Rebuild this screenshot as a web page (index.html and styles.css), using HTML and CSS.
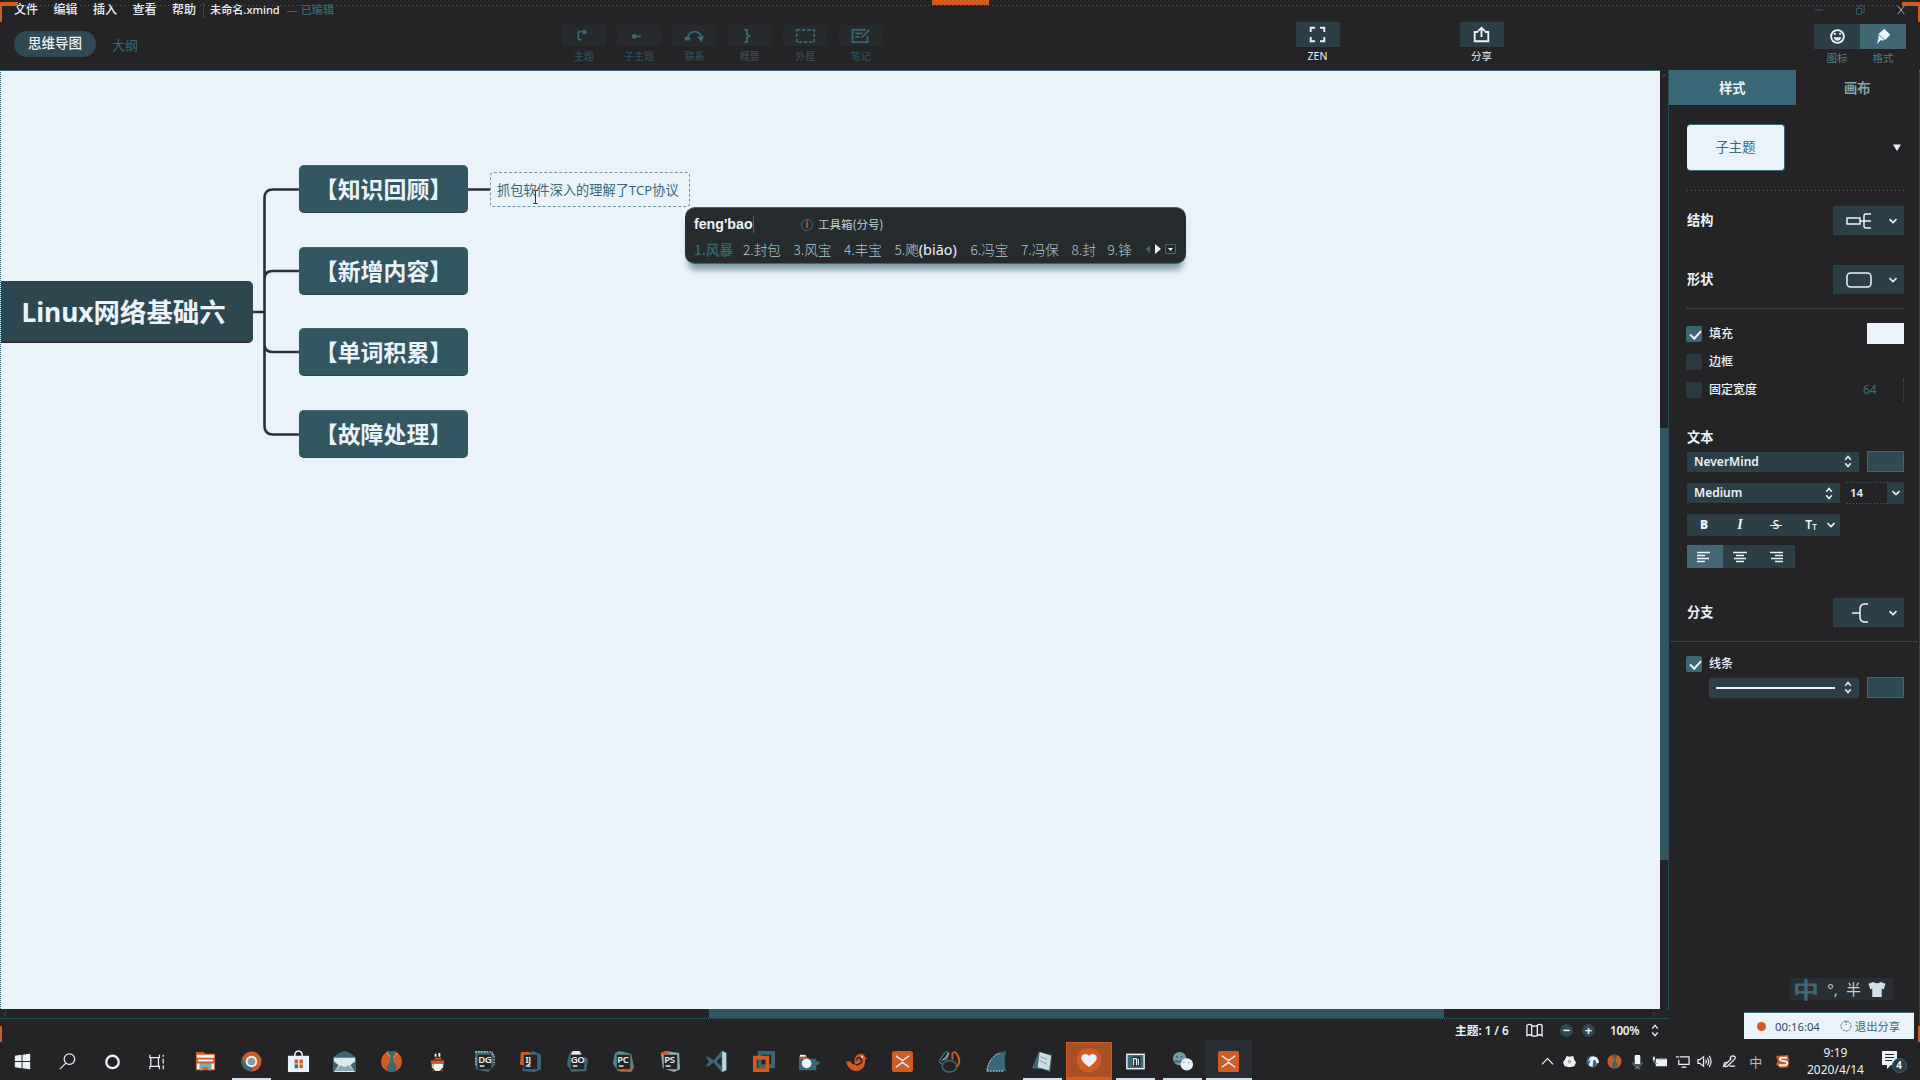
FILE: index.html
```html
<!DOCTYPE html>
<html lang="zh-CN">
<head>
<meta charset="utf-8">
<title>未命名.xmind</title>
<link rel="stylesheet" href="styles.css">
</head>
<body>
<div class="app">
  <header class="header">
    <div class="menubar">
      <nav class="menus"><span>文件</span><span>编辑</span><span>插入</span><span>查看</span><span>帮助</span></nav>
      <div class="doc"><b>未命名.xmind</b><i>—</i><em>已编辑</em></div>
      <div class="winctl">
        <svg viewBox="0 0 12 12"><path d="M1 6h10"/></svg>
        <svg viewBox="0 0 12 12"><path d="M2 4h6v7H2zM4 4V1h7v8H8"/></svg>
        <svg class="lit" viewBox="0 0 12 12"><path d="M2 1l8 10M10 1L2 11"/></svg>
      </div>
    </div>
    <div class="toolbar">
      <div class="modes"><span class="pill">思维导图</span><span class="outline">大纲</span></div>
      <div class="tools">
        <div class="tool"><span class="tbox"><svg viewBox="0 0 24 16"><path d="M10 3H8Q6 3 6 5v5q0 2 2 2h2"/><circle class="f" cx="13" cy="3.500" r="2.700"/></svg></span><small>主题</small></div>
        <div class="tool"><span class="tbox"><svg viewBox="0 0 24 16"><circle class="f" cx="6" cy="8.500" r="2.800"/><path d="M9 8.500h5"/></svg></span><small>子主题</small></div>
        <div class="tool"><span class="tbox"><svg viewBox="0 0 24 16"><path d="M4 11q1-8 8-8t8 8"/><path class="f" d="M1 9h6v4H1zM15 9l8-1-3 7z"/></svg></span><small>联系</small></div>
        <div class="tool"><span class="tbox"><svg viewBox="0 0 24 16"><path d="M6 1h3v5l3 2-3 2v5H6"/></svg></span><small>概要</small></div>
        <div class="tool"><span class="tbox"><svg viewBox="0 0 24 16"><path stroke-dasharray="4 2" d="M2 1h20v14H2z"/></svg></span><small>外框</small></div>
        <div class="tool"><span class="tbox"><svg viewBox="0 0 24 16"><path d="M20 8v7H3V1h15M6 5h8M6 9h5M22 1l-9 9"/></svg></span><small>笔记</small></div>
      </div>
      <div class="action"><span class="abox"><svg viewBox="0 0 20 20"><path d="M2 7V2h5M13 2h5v5M18 13v5h-5M7 18H2v-5"/></svg></span><small>ZEN</small></div>
      <div class="action"><span class="abox"><svg viewBox="0 0 20 20"><path d="M6 7H2v11h16V7h-4M10 13V2M6 6l4-4 4 4"/></svg></span><small>分享</small></div>
      <div class="panelsw">
        <div class="action dim"><span class="abox"><svg viewBox="0 0 20 20"><circle cx="10" cy="10" r="7.500"/><path d="M7 6v2M13 6v2"/><path class="f" d="M5.500 11h9q-1 4-4.500 4t-4.500-4z"/></svg></span><small>图标</small></div>
        <div class="action dim on"><span class="abox"><svg viewBox="0 0 20 20"><path class="f" d="M11 1l7 7-6 6-8-7zM4 8l7 6-2 1-2-1-5 5 2-6z"/></svg></span><small>格式</small></div>
      </div>
    </div>
  </header>

  <div class="body">
    <section class="work">
      <div class="canvasrow">
        <main class="canvas">
          <svg class="links" viewBox="0 0 700 500"><path d="M252 242h12M299 119.500h-26q-8.500 0-8.500 8.500v228q0 8.500 8.500 8.500h26M264.500 209q0-8 8-8H299M264.500 274q0 8 8 8H299M468 119.500h22"/></svg>
          <div class="root">Linux网络基础六</div>
          <div class="topic t1">【知识回顾】</div>
          <div class="topic t2">【新增内容】</div>
          <div class="topic t3">【单词积累】</div>
          <div class="topic t4">【故障处理】</div>
          <div class="editing">抓包软件深入的理解了TCP协议</div>
          <svg class="ibeam" viewBox="0 0 7 15"><path d="M1 .500h2l.500 1 .500-1h2M3.500 1v13M1 14.500h5"/></svg>
          <div class="ime">
            <div class="ime-top"><span class="typed">feng'bao</span><span class="info">i</span><span class="box">工具箱(分号)</span></div>
            <div class="cands">
              <span class="first">1.风暴</span><span>2.封包</span><span>3.风宝</span><span>4.丰宝</span><span>5.飑<b>(biāo)</b></span><span>6.冯宝</span><span>7.冯保</span><span>8.封</span><span>9.锋</span>
              <svg viewBox="0 0 32 12"><path class="p1" d="M6 2v8L2 6z"/><path class="p2" d="M11 1v10l6-5z"/><path class="p3" d="M21.500 1.500h10v9h-10z"/><path class="p2" d="M24 5h5l-2.500 3z"/></svg>
            </div>
          </div>
        </main>
        <div class="vscroll"><svg viewBox="0 0 8 6"><path d="M1 5l3-4 3 4"/></svg><span></span></div>
      </div>
      <div class="hscroll"><svg viewBox="0 0 6 8"><path d="M5 1L1 4l4 3"/></svg><span></span><svg viewBox="0 0 6 8"><path d="M1 1l4 3-4 3"/></svg></div>
      <div class="status">
        <b>主题: 1 / 6</b>
        <svg class="map" viewBox="0 0 18 14"><path d="M1 2q3-2 5 0t6 0q3-2 5 0v11q-2-2-5 0-3 1-6 0-2-2-5 0zM6 2v11M12 2v11"/></svg>
        <span class="zb">−</span><span class="zb">+</span>
        <b class="pct">100%</b>
        <svg class="ud" viewBox="0 0 8 14"><path d="M1 5l3-3.500L7 5M1 9l3 3.500L7 9"/></svg>
      </div>
    </section>

    <aside class="side">
      <div class="tabs"><span class="on">样式</span><span>画布</span></div>
      <div class="panel">
        <div class="preset"><span class="card">子主题</span><svg viewBox="0 0 8 7"><path d="M0 .500h8L4 7z"/></svg></div>
        <div class="dots"></div>
        <div class="row r-struct"><h3>结构</h3><span class="btn"><svg class="g" viewBox="0 0 26 18"><path d="M1 6h13v6H1zM14 9h11M25 2h-5q-2 0-2 2v10q0 2 2 2h5"/></svg><svg class="c" viewBox="0 0 8 6"><path d="M.500 1L4 4.500 7.500 1"/></svg></span></div>
        <div class="row r-shape"><h3>形状</h3><span class="btn"><svg class="g" viewBox="0 0 26 18"><rect x="1" y="2" width="24" height="14" rx="3.500"/></svg><svg class="c" viewBox="0 0 8 6"><path d="M.500 1L4 4.500 7.500 1"/></svg></span></div>
        <div class="dots dense"></div>
        <div class="row chk r-fill"><i class="ck on"></i><label>填充</label><span class="sw light"></span></div>
        <div class="row chk r-border"><i class="ck"></i><label>边框</label></div>
        <div class="row chk r-width"><i class="ck"></i><label>固定宽度</label><span class="num off">64</span></div>
        <div class="row r-text"><h3>文本</h3></div>
        <div class="row r-font"><span class="sel">NeverMind<svg viewBox="0 0 8 14"><path d="M1 5l3-3.500L7 5M1 9l3 3.500L7 9"/></svg></span><span class="sw"></span></div>
        <div class="row r-weight"><span class="sel">Medium<svg viewBox="0 0 8 14"><path d="M1 5l3-3.500L7 5M1 9l3 3.500L7 9"/></svg></span><span class="num">14</span><span class="drop"><svg viewBox="0 0 8 6"><path d="M.500 1L4 4.500 7.500 1"/></svg></span></div>
        <div class="row r-biu"><span><b>B</b></span><span><i>I</i></span><span><s>S</s></span><span>T<sub>T</sub><svg viewBox="0 0 8 6"><path d="M.500 1L4 4.500 7.500 1"/></svg></span></div>
        <div class="row r-align"><span class="on"><svg viewBox="0 0 14 12"><path d="M0 1.500h13M0 4.500h8M0 7.500h12M0 10.500h8"/></svg></span><span><svg viewBox="0 0 14 12"><path d="M0 1.500h14M3 4.500h8M1 7.500h12M3 10.500h8"/></svg></span><span><svg viewBox="0 0 14 12"><path d="M1 1.500h13M6 4.500h8M2 7.500h12M6 10.500h8"/></svg></span></div>
        <div class="row r-branch"><h3>分支</h3><span class="btn"><svg class="g" viewBox="0 0 26 20"><path d="M6 10h8M22 1h-3q-5 0-5 5v8q0 5 5 5h3"/></svg><svg class="c" viewBox="0 0 8 6"><path d="M.500 1L4 4.500 7.500 1"/></svg></span></div>
        <div class="dots full"></div>
        <div class="row chk r-line"><i class="ck on"></i><label>线条</label></div>
        <div class="row r-linesel"><span class="sel"><u></u><svg viewBox="0 0 8 14"><path d="M1 5l3-3.500L7 5M1 9l3 3.500L7 9"/></svg></span><span class="sw"></span></div>
      </div>
    </aside>
  </div>

  <footer class="taskbar">
    <div class="sys">
      <span><svg viewBox="0 0 24 24"><path fill="#eaf2fa" d="M4 6l7-1v6.500H4zM12 5l8-1v7.500h-8zM4 12.500h7V19l-7-1zM12 12.500h8V20l-8-1z"/></svg></span>
      <span><svg viewBox="0 0 24 24" class="ln"><circle cx="14" cy="9.500" r="5.500"/><path d="M10 14l-6 6"/></svg></span>
      <span><svg viewBox="0 0 24 24" class="ln bold"><circle cx="12" cy="12.500" r="6.500"/></svg></span>
      <span><svg viewBox="0 0 24 24" class="ln"><path d="M4 5v3h10V5M4 20v-3h10v3M5 8v9M13 8v9M18 5v2M18 9v5M18 16v4"/></svg></span>
    </div>
    <div class="apps">
      <span><svg viewBox="0 0 24 24"><path fill="#d05c24" d="M2 2h8l2 2h10v17H2z"/><path fill="#eaf2fa" d="M3 5h18v3H3zM4 10h16v2H4zM3 14h3v6H3zM18 14h3v6h-3z"/><path fill="#8aa6b1" d="M6 14h12v7h-3v-3H9v3H6z"/></svg></span>
      <span class="run"><svg viewBox="0 0 24 24"><circle cx="12" cy="12" r="10.500" fill="#d05c24"/><path fill="#3a6876" d="M2 8l5 7 5 2 1 5.500Q3 22 1.500 13z"/><circle cx="12" cy="12" r="6" fill="#eaf2fa"/><circle cx="12" cy="12" r="4" fill="#3a6876" opacity=".6"/></svg></span>
      <span><svg viewBox="0 0 24 24"><path fill="none" stroke="#eaf2fa" stroke-width="1.500" d="M8 7q0-6 4-6t4 6"/><path fill="#eaf2fa" d="M1 6h22v17H1z"/><path fill="#d05c24" d="M8 10h3.500v4H8zM13 10h3.500v4H13z"/><path fill="#3a6876" d="M8 15h3.500v4H8z"/><path fill="#d05c24" d="M13 15h3.500v4H13z"/></svg></span>
      <span><svg viewBox="0 0 24 24"><path fill="#3a6876" d="M0 8q6-6 12-7 6 1 12 7v15H0z"/><path fill="#dce8ef" d="M1 8h22v4l-5 4 5 7H1l5-7-5-4z"/><path fill="#8aa6b1" d="M2 22l6-6 4 2 4-2 6 6z"/></svg></span>
      <span><svg viewBox="0 0 24 24"><circle cx="12" cy="12" r="11" fill="#d05c24"/><path fill="#3a6876" d="M8 1h9l-4 7 2 5 2 3v4l-3 3h-5l-2-3 1-4 3-4-1-5z"/><path stroke="#eaf2fa" stroke-dasharray="1 1" d="M7 2l4 6M18 3l-3 4"/></svg></span>
      <span><svg viewBox="0 0 24 24"><path fill="#eaf2fa" d="M9 4h2v3H9zM13 3h2v4h-2zM6 14h12v4l-4 4h-4l-4-4z"/><path fill="#d05c24" d="M9 8h7v2H9zM5 11h14v3H8v4H7v-4H5zM6 21h3v1H6zM15 21h3v1h-3z"/></svg></span>
      <span><svg viewBox="0 0 24 24"><path fill="#3a6876" d="M2 1h11l8 4v13l-5 5-13-3z"/><path fill="none" stroke="#eaf2fa" stroke-dasharray="2 1" d="M2 2h18v3h2v11M3 8v9"/><rect x="5" y="5" width="14" height="15" fill="#242426"/><text x="5.500" y="13.500">DG</text><path fill="#eaf2fa" d="M7 16h5v1.500H7z"/></svg></span>
      <span><svg viewBox="0 0 24 24"><path fill="#3a6876" d="M9 3l6-2 8 4v15l-7 3-13-1z"/><path fill="#d05c24" d="M2 2h9v6l-4 9-6-2z"/><rect x="5" y="5" width="14" height="15" fill="#242426"/><text x="6.500" y="13.500">IJ</text><path fill="#eaf2fa" d="M7 16h5v1.500H7z"/></svg></span>
      <span><svg viewBox="0 0 24 24"><path fill="#3a6876" d="M6 1h9l2 4 6 5-2 12-15 1-5-8 2-10z"/><path fill="#dce8ef" d="M7 1h7l2 4H5z"/><rect x="5" y="5" width="14" height="15" fill="#242426"/><text x="5" y="13.500">GO</text><path fill="#eaf2fa" d="M7 16h5v1.500H7z"/></svg></span>
      <span><svg viewBox="0 0 24 24"><path fill="#5d828e" d="M3 3l5-2 12 3 3 14-3 5-14-1-5-8z"/><path fill="#d05c24" d="M7 20l14-3v4l-12 2z"/><rect x="5" y="5" width="14" height="15" fill="#242426"/><text x="5.500" y="13.500">PC</text><path fill="#eaf2fa" d="M7 16h5v1.500H7z"/></svg></span>
      <span><svg viewBox="0 0 24 24"><path fill="#8aa6b1" d="M2 3l5-2 14 2 1 17-6 3-12-4z"/><path fill="#d05c24" d="M3 2l7-1v4H3z"/><rect x="5" y="5" width="14" height="15" fill="#242426"/><text x="5.500" y="13.500">PS</text><path fill="#eaf2fa" d="M7 16h5v1.500H7z"/></svg></span>
      <span><svg viewBox="0 0 24 24"><path fill="#3a6876" fill-rule="evenodd" d="M1 7h3l5 4 8-10 6 2v18l-6 2-8-10-5 4H1l3-5zM17 7l-5 5 5 5z"/><path fill="#c3d4dd" d="M18 1l4 2v18l-4 2z"/></svg></span>
      <span><svg viewBox="0 0 24 24" fill="none" stroke-width="4"><rect x="8" y="3" width="14" height="14" stroke="#3a6876"/><rect x="3" y="8" width="13" height="13" stroke="#d05c24"/></svg></span>
      <span><svg viewBox="0 0 24 24"><path fill="#3a6876" d="M1 6h8l1 3h9v3h4l-2 4h-2v5H1z"/><path fill="#d05c24" d="M2 8h9v1.500H2z"/><circle cx="9" cy="14" r="5" fill="#eaf2fa"/><path fill="#eaf2fa" d="M2 5h6v2H2z"/></svg></span>
      <span><svg viewBox="0 0 24 24"><path fill="#d05c24" d="M1 12h5q1 3 4 3-1-10 6-11 5 0 5 4h2l-2 3q0 11-11 11-7-2-9-10z"/><path fill="none" stroke="#242426" stroke-width="1.500" d="M11 15q2 1 5-1t0-5-4 2"/><circle cx="18" cy="7" r="1" fill="#eaf2fa"/></svg></span>
      <span><svg viewBox="0 0 24 24"><rect x="1" y="1" width="22" height="22" rx="3" fill="#d05c24"/><path class="xm" d="M5 6l7 5 7-5M5 18l7-5 7 5"/></svg></span>
      <span><svg viewBox="0 0 24 24" fill="none" stroke="#3a6876" stroke-width="1.600"><ellipse cx="12" cy="17" rx="7.500" ry="6"/><path d="M5 14Q0 14 2 10L7 3q4-3 4 2-1 4-4 6"/><path stroke="#d05c24" stroke-width="2" d="M15 10V4q3-4 5 1 3 5 2 8-1 4-3 4"/><path stroke="#eaf2fa" stroke-width="1" d="M4 11q5-2 7-8"/></svg></span>
      <span><svg viewBox="0 0 24 24"><path fill="#3a6876" d="M2 22Q4 4 22 1q-3 12 0 21z"/><path fill="none" stroke="#dce8ef" stroke-dasharray="2 1" d="M2 21Q5 6 16 3M2 22h18"/></svg></span>
      <span class="run"><svg viewBox="0 0 24 24"><path fill="#3a6876" d="M1 19L8 2l14 3-2 18-8-3z"/><path fill="#ccdae1" d="M9 2l12 4-2 15-12-3z"/><path stroke="#7b9ba7" d="M10 7l7 3M9 11l8 4"/></svg></span>
      <span class="hot"><svg viewBox="0 0 32 32"><circle cx="16" cy="16" r="14" fill="#d05c24"/><path fill="#eaf2fa" d="M16 24Q3 15 9 10q4-2 7 1 3-3 7-1 6 5-7 14z"/></svg></span>
      <span class="run"><svg viewBox="0 0 24 24"><rect x="3" y="4.500" width="18" height="15" fill="#3a6876" stroke="#eaf2fa" stroke-width="1.500"/><path fill="#242426" d="M9 7h8v10H9z"/><path fill="none" stroke="#eaf2fa" stroke-width="1.200" d="M10 16V9h3v7M15 9v7"/></svg></span>
      <span class="run"><svg viewBox="0 0 24 24"><circle cx="9" cy="9" r="7" fill="#7b9ba7"/><path stroke="#3a6876" stroke-width="2" d="M5 7h2M10 7h2M3 12h10"/><circle cx="16.500" cy="15" r="6.500" fill="#eaf2fa"/><path stroke="#3a6876" d="M13 13h1M18 13h1"/></svg></span>
      <span class="run cur"><svg viewBox="0 0 24 24"><rect x="1" y="1" width="22" height="22" rx="2" fill="#d05c24"/><path class="xm" d="M5 6l7 5 7-5M5 18l7-5 7 5"/></svg></span>
    </div>
    <div class="tray">
      <span><svg viewBox="0 0 16 16" class="ln"><path d="M2 11l6-6 6 6"/></svg></span>
      <span><svg viewBox="0 0 16 16"><path fill="#eaf2fa" d="M5 2l3 1 4-1 1 4 2 3-2 4-5 1-5-1-2-4 2-3z"/><circle cx="8" cy="8" r="2" fill="#d05c24" opacity=".5"/></svg></span>
      <span><svg viewBox="0 0 16 16"><circle cx="8" cy="8" r="6.500" fill="#3a6876"/><path fill="#eaf2fa" d="M6 3q8-2 9 6l-3 1q0-4-3-4l-1 8-4-2 2-6-3 2z"/></svg></span>
      <span><svg viewBox="0 0 16 16"><circle cx="8" cy="8" r="7.500" fill="#d05c24"/><path fill="#3a6876" d="M5 1h6L9 6l2 5-1 4H6l-1-4 3-5z"/></svg></span>
      <span><svg viewBox="0 0 16 16"><rect x="5" y="1" width="6" height="10" rx="1" fill="#eaf2fa"/><path stroke="#7b9ba7" fill="none" d="M3 9q0 4 5 4t5-4M8 13v2M5 15h6"/></svg></span>
      <span><svg viewBox="0 0 16 16"><path fill="#eaf2fa" d="M4 5h12v8H4zM1 3h2v4H1z"/><path stroke="#8aa6b1" fill="none" d="M2 7q0 4 4 3M7 5.500h8"/></svg></span>
      <span><svg viewBox="0 0 16 16" class="ln"><path d="M5 3h10v8H4V6M1 3h3M7 14h5"/></svg></span>
      <span><svg viewBox="0 0 16 16" class="ln"><path d="M1 6h2l4-3v10l-4-3H1zM9 6q2 2 0 4M11 4q3 4 0 8M13 2q4 6 0 12"/></svg></span>
      <span><svg viewBox="0 0 16 16" class="ln"><path d="M1 14l9-9M9 6q-1-4 3-4 4 1 1 4L7 12q-4 3-5 0 0-4 4-3M8 13h6"/></svg></span>
      <span class="zh">中</span>
      <span><svg viewBox="0 0 16 16"><path fill="#d05c24" d="M1 2l13-1 1 5-1 8-8 1-5-4 2-3z"/><path fill="none" stroke="#eaf2fa" stroke-width="2" d="M13 4H6q-2 2 1 3l5 1q3 3-1 4H4"/></svg></span>
      <time>9:19<br>2020/4/14</time>
      <span class="note"><svg viewBox="0 0 24 24"><path fill="#eaf2fa" d="M1 2h15v14h-6l-4 4v-4H1z"/><path stroke="#242426" d="M4 5.500h9M4 8.500h9M4 11.500h7"/></svg><em>4</em></span>
    </div>
  </footer>

  <div class="topline"></div>
  <i class="mark tl"></i><i class="mark tr"></i><i class="mark tm"></i><i class="mark bl"></i><i class="mark br"></i>
  <div class="imebar"><b>中</b><span>°,</span><span>半</span><svg viewBox="0 0 20 18"><path d="M1 3l5-2q4 3 8 0l5 2-2 6-2-1v9H5V8L3 9z"/></svg></div>
  <div class="share"><i></i><span>00:16:04</span><svg viewBox="0 0 12 12"><circle cx="6" cy="6" r="5"/><path d="M6 1v4"/></svg><span class="exit">退出分享</span></div>
</div>
</body>
</html>
```
FILE: styles.css
```css
:root {
  --dark: #242426;
  --teal: #3a6876;
  --light: #eaf2fa;
  --orange: #d05c24;
  --field: #2c3f46;
}
* { box-sizing: border-box; }
body {
  margin: 0;
  background: var(--dark);
  color: var(--light);
  font-family: "Noto Sans", "Noto Sans CJK SC", sans-serif;
  font-size: 12px;
}
svg { display: block; flex: none; }
b, em, i { font-style: normal; }
.app {
  position: relative;
  width: 1920px;
  height: 1080px;
  display: flex;
  flex-direction: column;
  overflow: hidden;
  white-space: nowrap;
}

/* header */
.header { height: 70px; flex: none; }
.menubar { height: 20px; display: flex; align-items: center; line-height: 20px; font-weight: 500; }
.menus { display: flex; gap: 15.5px; padding: 0 7px 0 14px; height: 20px; }
.doc { display: flex; padding-left: 6px; height: 14px; line-height: 13px; border-left: 1px dotted var(--teal); font-size: 11.1px; }
.doc b { font-weight: 500; }
.doc i { color: var(--teal); margin: 0 4px 0 7px; width: 10px; overflow: hidden; }
.doc em { color: var(--teal); }
.winctl { margin-left: auto; display: flex; gap: 31px; padding-right: 14px; }
.winctl svg { width: 10px; height: 10px; fill: none; stroke: var(--teal); }
.winctl .lit { stroke: #b9cbd5; }
.toolbar { display: grid; grid-template-columns: 555px 740px 164px 355px auto; height: 50px; }
.modes { display: flex; align-items: center; padding: 0 0 2px 14px; gap: 16px; height: 50px; }
.pill { background: #2f4a54; border-radius: 13px; width: 82px; height: 26px; line-height: 25px; text-align: center; font-size: 13.5px; font-weight: 500; }
.outline { color: var(--teal); font-size: 13px; }
.tools { display: flex; padding: 5px 0 0 1px; }
.tool { width: 55.4px; display: flex; flex-direction: column; align-items: center; color: var(--teal); }
.tbox { width: 44px; height: 21px; display: flex; align-items: center; justify-content: center; background: #262a2d; }
.tbox svg { width: 21px; height: 16px; fill: none; stroke: var(--teal); stroke-width: 2; }
.tbox svg .f, .abox svg .f { fill: currentColor; stroke: none; }
small { font-size: 10px; line-height: 12px; margin-top: 4px; }
.tool small { color: #335560; }
.action { width: 45px; padding-top: 2px; display: flex; flex-direction: column; align-items: center; }
.action small { font-size: 10.5px; margin-top: 3px; }
.abox { width: 44px; height: 25px; background: var(--field); display: flex; align-items: center; justify-content: center; color: var(--light); }
.abox svg { width: 19px; height: 17px; fill: none; stroke: currentColor; stroke-width: 2.2; }
.panelsw { display: flex; }
.panelsw .action { padding-top: 4px; width: 46px; }
.panelsw .abox { width: 46px; }
.dim small { color: #557d8a; }
.dim.on .abox { background: #426774; }

/* work area */
.body { flex: 1; display: flex; min-height: 0; }
.work { width: 1669px; display: flex; flex-direction: column; }
.canvasrow { flex: 1; display: flex; }
.canvas { position: relative; width: 1660px; background: var(--light); border-top: 1px solid var(--teal); border-left: 1px dotted var(--teal); overflow: hidden; }
.links { position: absolute; left: -1px; top: -1px; width: 700px; height: 500px; fill: none; stroke: #26343a; stroke-width: 2.6; }
.root, .topic { position: absolute; display: flex; align-items: center; justify-content: center; color: var(--light); font-weight: 700; }
.root { left: -1px; top: 210px; width: 253px; height: 62px; background: #2d4751; font-size: 26.4px; border-radius: 0 5px 5px 0; border-bottom: 1px solid var(--dark); padding: 0 6px 2px 0; }
.topic { left: 298px; width: 169px; height: 48px; border-radius: 5px; background: #325662; border-top: 1px solid var(--teal); border-bottom: 1px solid #2a424b; font-size: 22.9px; padding-bottom: 2px; }
.t1 { top: 94px; }
.t2 { top: 176px; }
.t3 { top: 257px; }
.t4 { top: 339px; }
.editing { position: absolute; left: 489px; top: 101px; width: 200px; height: 35px; border: 1px dashed #6f939f; border-radius: 4px; color: var(--teal); font-size: 13.2px; line-height: 34px; padding-left: 6px; }
.ibeam { position: absolute; left: 531px; top: 119px; width: 7px; height: 14px; fill: none; stroke: var(--dark); }
.ime { position: absolute; left: 684px; top: 136px; width: 501px; height: 57px; border-radius: 10px; background: #262b2e; border-top: 1px solid var(--teal); border-bottom: 1px solid var(--teal); box-shadow: 0 9px 6px -3px #7f9fab; font-family: "Noto Sans CJK SC", sans-serif; }
.ime-top { display: flex; align-items: center; height: 32px; padding-left: 9px; }
.typed { font: 700 14.2px "Liberation Sans", sans-serif; border-right: 1px solid var(--teal); width: 60px; height: 17px; line-height: 17px; }
.info { width: 12px; height: 12px; margin: 2px 5px 0 47px; border: 1px solid var(--teal); border-radius: 50%; color: var(--orange); font: 700 10px/10px "Liberation Sans", sans-serif; text-align: center; }
.box { font-size: 11.5px; line-height: 14px; color: #c2d2db; }
.cands { display: flex; align-items: center; height: 20px; padding: 0 0 3px 9px; font-size: 13.6px; font-weight: 300; color: #b5c8d1; }
.cands span { width: 50.5px; height: 22px; line-height: 22px; }
.cands .first { color: var(--teal); font-weight: 500; width: 49px; }
.cands span:nth-child(5) { width: 76px; }
.cands span:nth-child(8) { width: 36px; }
.cands span:nth-child(9) { width: 36px; }
.cands b { font: 400 14.4px/20px "Noto Sans", sans-serif; color: var(--light); }
.cands svg { width: 32px; height: 12px; }
.p1 { fill: var(--teal); }
.p2 { fill: var(--light); }
.p3 { fill: none; stroke: var(--teal); }
.vscroll { width: 9px; border-right: 1px dotted var(--teal); display: flex; flex-direction: column; align-items: center; padding-top: 3px; }
.vscroll svg { width: 6px; height: 5px; fill: none; stroke: var(--teal); margin-bottom: 350px; }
.vscroll span { width: 9px; height: 432px; background: #315561; }
.hscroll { height: 10px; display: flex; align-items: center; border-bottom: 1px dotted var(--teal); padding-left: 3px; }
.hscroll svg { width: 4px; height: 6px; fill: none; stroke: var(--teal); }
.hscroll span { margin: 0 208px 0 702px; width: 735px; height: 9px; background: #315561; }
.status { height: 21px; display: flex; align-items: center; padding: 1px 0 0 1455px; font-size: 11.7px; line-height: 16px; }
.status b { font-weight: 600; width: 71px; }
.map { width: 17px; height: 14px; fill: none; stroke: var(--light); stroke-width: 1.4; }
.zb { width: 13px; height: 13px; border-radius: 50%; background: #2f4a54; font-weight: 700; font-size: 13px; line-height: 12px; text-align: center; margin-left: 17px; }
.zb + .zb { margin-left: 9px; }
.status .pct { margin-left: 15px; width: 41px; letter-spacing: -0.3px; }
.ud { width: 8px; height: 13px; fill: none; stroke: var(--light); stroke-width: 1.5; }

/* sidebar */
.side { width: 251px; border-right: 1px dotted var(--teal); }
.tabs { display: flex; height: 35px; line-height: 37px; text-align: center; font-size: 13.3px; font-weight: 700; }
.tabs span { width: 124px; color: #86a5b0; }
.tabs .on { width: 127px; background: var(--teal); color: var(--light); }
.panel { display: flex; flex-direction: column; padding: 19px 15px 0 18px; }
.preset { display: flex; align-items: center; justify-content: space-between; padding-right: 3px; }
.preset svg { width: 8px; height: 7px; fill: var(--light); }
.card { width: 98px; height: 47px; border-radius: 4px; background: var(--light); border: 1px solid var(--teal); border-left: 0; color: var(--teal); font-size: 13.3px; line-height: 45px; text-align: center; }
.dots { height: 1px; margin: 19px 0 15px; background: repeating-linear-gradient(90deg, var(--teal) 0 1px, transparent 1px 4px); }
.dots.dense { margin: 14px 0; background: repeating-linear-gradient(90deg, var(--teal) 0 1px, transparent 1px 2px); }
.dots.full { margin: 14px -14px 11px -16px; background: repeating-linear-gradient(90deg, var(--teal) 0 1px, transparent 1px 2px); }
.row { display: flex; align-items: center; }
.row h3 { margin: 0; font-size: 13.2px; font-weight: 700; line-height: 18px; padding-bottom: 1px; }
.btn { margin-left: auto; width: 71px; height: 29px; background: var(--field); display: flex; align-items: center; justify-content: space-between; padding: 0 7px 0 13px; }
.btn .g { width: 26px; height: 18px; fill: none; stroke: var(--light); stroke-width: 1.5; }
.r-branch .btn .g { height: 20px; }
.c, .drop svg, .r-biu svg { width: 8px; height: 6px; fill: none; stroke: var(--light); stroke-width: 1.6; }
.r-shape { margin-top: 30px; }
.chk { height: 21px; font-weight: 500; }
.chk label { margin-left: 7px; line-height: 18px; }
.ck { width: 16px; height: 16px; margin-left: -1px; border-radius: 2px; background: #2a3a40; display: flex; }
.ck.on { background: var(--teal); }
.ck.on::after { content: ""; width: 5px; height: 9px; margin: 2px 0 0 6px; border: solid var(--light); border-width: 0 2px 2px 0; transform: rotate(42deg); }
.sw { margin-left: auto; width: 37px; height: 21px; background: #2e4a54; border: 1px solid var(--teal); }
.sw.light { background: var(--light); border-color: var(--light); }
.r-border { margin-top: 7px; }
.r-width { margin-top: 7px; }
.num.off { margin-left: auto; width: 44px; height: 22px; line-height: 22px; padding-left: 3px; color: var(--teal); border-right: 1px dotted #315561; }
.r-text { margin-top: 27px; height: 20px; }
.r-font { margin-top: 4px; }
.sel { width: 172px; height: 20px; background: var(--field); display: flex; align-items: center; justify-content: space-between; padding: 0 7px; font-weight: 600; line-height: 20px; }
.sel svg { width: 8px; height: 13px; fill: none; stroke: var(--light); stroke-width: 1.6; }
.r-weight { margin-top: 10px; }
.r-weight .sel { width: 153px; }
.r-weight .num { margin-left: 7px; width: 40px; height: 22px; line-height: 22px; padding-left: 3px; font-weight: 600; font-size: 11.5px; background: repeating-linear-gradient(90deg, #3a6876 0 1px, transparent 1px 3px) 0 0 / 100% 1px no-repeat, repeating-linear-gradient(90deg, #3a6876 0 1px, transparent 1px 3px) 0 100% / 100% 1px no-repeat; }
.drop { width: 17px; height: 22px; background: var(--field); display: flex; align-items: center; justify-content: center; }
.r-biu { margin-top: 10px; width: 153px; height: 22px; background: var(--field); font-weight: 600; }
.r-biu > span { width: 36px; padding-right: 2px; display: flex; justify-content: center; align-items: center; line-height: 20px; }
.r-biu > span:last-child { width: 45px; padding: 0 0 0 5px; }
.r-biu i { font-style: italic; font-family: "Liberation Serif", serif; font-size: 14px; }
.r-biu s { font-weight: 500; text-decoration: none; padding: 0 3px; background: linear-gradient(var(--light), var(--light)) 0 10px / 100% 1px no-repeat; }
.r-biu sub { font-size: 8px; line-height: 10px; vertical-align: baseline; padding-top: 3px; }
.r-biu svg { margin-left: 10px; }
.r-align { margin-top: 9px; width: 108px; height: 23px; background: var(--field); }
.r-align span { width: 36px; height: 23px; padding-right: 2px; display: flex; align-items: center; justify-content: center; }
.r-align .on { background: #446774; }
.r-align svg { width: 14px; height: 12px; stroke: var(--light); stroke-width: 1.5; }
.r-branch { margin-top: 30px; }
.r-linesel { margin-top: 3px; }
.r-linesel .sel { margin-left: 22px; width: 150px; }
.sel u { width: 119px; height: 2px; background: var(--light); }

/* taskbar */
.taskbar { height: 40px; flex: none; display: flex; }
.sys { display: flex; width: 182px; padding-top: 10px; }
.sys span { width: 45px; display: flex; justify-content: center; }
.sys svg { width: 23px; height: 23px; }
.ln { fill: none; stroke: var(--light); stroke-width: 1.3; }
.ln.bold { stroke-width: 2.4; }
.apps { display: flex; width: 1070px; }
.apps > span { width: 46.52px; display: flex; flex-direction: column; align-items: center; padding-top: 10px; height: 40px; }
.apps svg { width: 23px; height: 23px; margin-bottom: 5px; }
.apps text { font: 600 10px "Noto Sans", sans-serif; fill: var(--light); letter-spacing: -0.5px; }
.run::after { content: ""; width: 39px; height: 2px; background: #d4e0e8; }
.run.cur::after { width: 46px; }
.run.cur { background: #282e32; }
.apps .hot { padding-top: 3px; margin-top: 2px; height: 38px; background: #a94f25; border: 1px solid var(--orange); border-bottom-width: 3px; }
.apps .hot svg { width: 28px; height: 28px; }
.xm { fill: none; stroke: var(--light); stroke-width: 1.6; }
.tray { margin-left: auto; width: 384px; display: flex; align-items: center; padding-top: 2px; }
.tray > span { width: 22.5px; display: flex; justify-content: center; }
.tray > span:nth-child(9), .tray > span:nth-child(10), .tray > span:nth-child(11) { width: 26.5px; }
.tray svg { width: 15px; height: 15px; }
.zh { font-size: 13px; color: #a9bfca; }
.tray time { width: 76px; margin-left: 2px; font-size: 12px; line-height: 17.5px; text-align: center; }
.tray .note { position: relative; margin-left: 5px; width: 28px; }
.tray .note svg { width: 24px; height: 24px; }
.note em { position: absolute; left: 13px; top: 9px; width: 15px; height: 15px; border-radius: 50%; border: 1px solid var(--teal); background: #2b3b41; font: 700 10px/13px "Noto Sans", sans-serif; text-align: center; }

/* overlays */
.topline { position: absolute; left: 20px; right: 20px; top: 5px; height: 1px; background: repeating-linear-gradient(90deg, var(--teal) 0 1px, transparent 1px 4px); }
.mark { position: absolute; }
.tl, .tr { top: 2px; width: 18px; height: 20px; border-top: 4px solid var(--orange); }
.tl { left: 0; border-left: 2px solid var(--orange); }
.tr { right: 0; border-right: 2px solid var(--orange); }
.tm { left: 932px; top: 0; width: 57px; height: 5px; background: var(--orange); }
.bl, .br { top: 1026px; width: 2px; height: 16px; background: var(--orange); }
.bl { left: 0; }
.br { right: 0; }
.imebar { position: absolute; left: 1790px; top: 978px; width: 103px; height: 22px; display: flex; align-items: center; background: #282e31; font-size: 15px; line-height: 20px; color: #c2d2db; }
.imebar b { width: 32px; text-align: center; color: var(--teal); font-size: 22px; font-weight: 700; transform: scaleX(1.2); }
.imebar span { width: 21px; text-align: center; }
.imebar svg { width: 20px; height: 17px; margin-left: 3px; fill: #d4e0e8; }
.share { position: absolute; left: 1744px; top: 1012px; width: 170px; height: 27px; display: flex; align-items: center; background: var(--light); border-top: 1px solid var(--teal); color: #2f4a54; font-size: 11.3px; }
.share i { width: 9px; height: 9px; border-radius: 50%; background: var(--orange); margin: 0 9px 0 13px; }
.share svg { width: 12px; height: 12px; margin: 0 3px 0 20px; fill: none; stroke: var(--teal); stroke-dasharray: 2 1; }
.share .exit { color: var(--teal); }
```
